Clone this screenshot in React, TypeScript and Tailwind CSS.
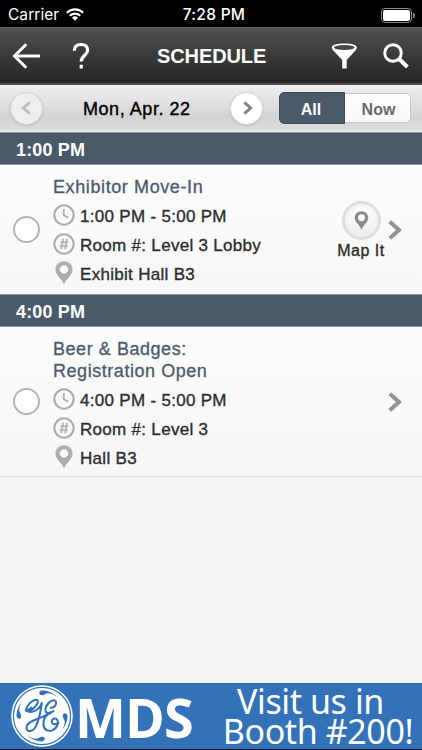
import React from "react";

const Pin = ({ className = "" }: { className?: string }) => (
  <svg viewBox="0 0 18 24" className={className} fill="currentColor">
    <path
      fillRule="evenodd"
      d="M9 .3C4.1.3.4 4 .4 8.6c0 5.400 6.400 9.300 8.600 15.100 2.200-5.800 8.600-9.700 8.600-15.100C17.600 4 13.900.3 9 .3Zm0 3.900a4.300 4.300 0 1 1 0 8.600 4.300 4.300 0 0 1 0-8.600Z"
    />
  </svg>
);

const Clock = () => (
  <svg viewBox="0 0 22 22" className="size-[22px]" fill="none" stroke="#adadad">
    <circle cx="11" cy="11" r="9.7" strokeWidth="2.1" />
    <path d="M10.800 5v6.200l4.400 2.600" strokeWidth="1.8" />
  </svg>
);

const Hash = () => (
  <svg viewBox="0 0 22 22" className="size-[22px]" fill="none" stroke="#adadad">
    <circle cx="11" cy="11" r="9.7" strokeWidth="2.1" />
    <path d="M10.300 5.700 8.200 16.300M14.100 5.700l-2.100 10.600M7.200 9.200h8.200M6.600 12.900h8.200" strokeWidth="1.500" />
  </svg>
);

const Chevron = () => (
  <svg viewBox="0 0 14 20" className="h-5 w-3.5 shrink-0" fill="none" stroke="#949494">
    <path d="M1.700 1.700 11 10l-9.300 8.300" strokeWidth="4" />
  </svg>
);

const Arrow = ({ flip, color }: { flip?: boolean; color: string }) => (
  <svg viewBox="0 0 10 14" className={flip ? "h-3.5 w-2.5 rotate-180" : "h-3.5 w-2.5"} fill="none" stroke={color}>
    <path d="M1.300 1.300 7.600 7l-6.300 5.700" strokeWidth="3" />
  </svg>
);

const TimeHeader = ({ children }: { children: React.ReactNode }) => (
  <div className="flex h-[33px] shrink-0 items-center border-y border-[#8c98a5] bg-[#4b5a6b] pl-4 text-[18px] font-bold text-white">
    <span className="mt-[3px] tracking-[0.15px]">{children}</span>
  </div>
);

const Detail = ({ icon, children }: { icon: React.ReactNode; children: React.ReactNode }) => (
  <div className="flex h-[29px] items-center gap-[5px] text-[17px] tracking-[0.3px] text-[#2d2d2d] [-webkit-text-stroke:0.35px_#2d2d2d]">
    <span className="flex w-[22px] justify-center">{icon}</span>
    <span className="mt-[3px] whitespace-nowrap">{children}</span>
  </div>
);

const Radio = () => (
  <span className="ml-[13px] size-[27px] shrink-0 rounded-full border-2 border-[#b4b4b4] bg-white" />
);

const swirl = "M46.500 12C40.500 7 35 5.300 31 5.600c-3.300.3-3.800 4.200-.6 4.600 2.800.3 4-1.900 6.300-2 3.200 0 6.200 1.500 9.800 3.800Z";

const GELogo = () => (
  <svg viewBox="0 0 62 62" className="size-[62px] shrink-0">
    <circle cx="31" cy="31" r="30.800" fill="#fff" />
    <circle cx="31" cy="31" r="28.600" fill="none" stroke="#3372b9" strokeWidth="1.200" />
    <g fill="#3372b9">
      <path d={swirl} />
      <path d={swirl} transform="rotate(90 31 31)" />
      <path d={swirl} transform="rotate(180 31 31)" />
      <path d={swirl} transform="rotate(270 31 31)" />
    </g>
    <g
      transform="translate(-3.500 -4) scale(.3333)"
      fill="none"
      stroke="#3372b9"
      strokeWidth="6"
      strokeLinecap="round"
      strokeLinejoin="round"
    >
      <path d="M72 80C60 88 52 94 56 84 60 72 72 58 84 56 96 55 92 68 82 78 72 89 64 91 60 90" />
      <path d="M60 91C80 98 98 82 103 66 99 95 95 115 86 134 78 152 58 156 57 141 57 126 75 120 94 112 108 107 120 104 130 94" />
      <path d="M130 80C143 82 152 62 141 58 128 55 112 76 114 89 116 99 130 98 138 90" />
      <path d="M128 95C114 98 107 117 108 131 109 148 122 152 134 148 150 142 156 122 147 114 138 109 130 118 134 126 138 132 146 130 153 125" />
    </g>
  </svg>
);

export default function App() {
  return (
    <div className="flex h-[750px] w-[422px] flex-col overflow-hidden bg-[#f5f5f5] font-['Liberation_Sans',Arial,sans-serif]">
      <div className="grid h-[27px] shrink-0 grid-cols-3 items-center bg-black px-2 pt-[3px] text-white">
        <div className="flex items-center gap-[7px] font-['Inter',sans-serif] text-[15.500px] tracking-[0.05px]">
          Carrier
          <svg viewBox="0 0 18 13" className="mb-0.5 h-[13px] w-[18px]" fill="none" stroke="#fff" strokeWidth="2.300">
            <path d="M.9 4.700a11.600 11.600 0 0 1 16.200 0M3.800 7.800a7.400 7.400 0 0 1 10.400 0" />
            <path d="M9 12.800 6 9.800a4.300 4.300 0 0 1 6 0Z" fill="#fff" stroke="none" />
          </svg>
        </div>
        <div className="whitespace-nowrap pl-1.5 text-center font-['Inter',sans-serif] text-[15.500px] font-medium tracking-[0.3px]">7:28 PM</div>
        <div className="-mr-px flex items-center justify-end gap-px">
          <span className="block h-[15px] w-[31px] rounded-[4px] border border-[#888] p-px">
            <span className="block size-full rounded-[2px] bg-white" />
          </span>
          <span className="h-[5px] w-[2px] rounded-r-full bg-[#888]" />
        </div>
      </div>

      <div className="flex h-[58px] shrink-0 items-center border-t border-b-[2px] border-t-[#626262] border-b-[#505050] bg-gradient-to-b from-[#515151] to-[#252525] text-white">
        <svg viewBox="0 0 28 26" className="ml-3 h-[26px] w-7 shrink-0" fill="none" stroke="#fff" strokeWidth="2.900">
          <path d="M14.300 1.200 2.500 13l11.800 11.800M2.500 13H28" />
        </svg>
        <svg viewBox="0 0 18 28" className="ml-8 h-7 w-[18px] shrink-0" fill="none" stroke="#fff" strokeWidth="3.200">
          <path d="M2.300 8.800C2.300 4.600 4.800 2.500 9 2.500s6.600 2.100 6.600 5.800c0 5-6.400 5.600-6.400 11.200M9.200 22.800v3.700" />
        </svg>
        <span className="ml-[67px] w-[110px] whitespace-nowrap text-[20px] font-bold tracking-[-0.100px]">SCHEDULE</span>
        <svg viewBox="0 0 27 26" className="ml-[64px] h-[26px] w-[27px] shrink-0">
          <path d="M.8 4.500C.8 1.700 6.200.5 13.300.5s12.500 1.200 12.500 4c0 1.500-1 2.600-2.300 4l-7.800 8.600v8.500h-4.500v-8.500L3.200 8.500C1.800 7 .8 6 .8 4.500Z" fill="#fff" />
          <ellipse cx="13.300" cy="4.600" rx="10.300" ry="2.500" fill="#464646" />
        </svg>
        <svg viewBox="0 0 26 26" className="ml-[25px] size-[26px] shrink-0" fill="none" stroke="#fff">
          <circle cx="10" cy="10" r="8.300" strokeWidth="2.900" />
          <path d="m15.800 15.800 8.600 8.200" strokeWidth="4" />
        </svg>
      </div>

      <div className="flex h-[47px] shrink-0 items-center border-b border-[#edf2f7] bg-gradient-to-b from-[#efeff1] via-[#d4d4d6] via-70% to-[#dedee0]">
        <span className="ml-2.5 flex size-[33px] shrink-0 items-center justify-center rounded-full border border-[#d5d5d5] bg-[#efeff0] pr-px shadow-sm">
          <Arrow flip color="#bdbdbd" />
        </span>
        <span className="ml-10 mt-0.5 w-[110px] whitespace-nowrap text-[18px] tracking-[0.550px] text-black [-webkit-text-stroke:0.4px_#000]">Mon, Apr. 22</span>
        <span className="ml-[37px] flex size-[33px] shrink-0 items-center justify-center rounded-full border border-[#dadada] bg-white pl-0.5 shadow">
          <Arrow color="#858585" />
        </span>
        <div className="ml-4 flex h-8 w-[132px] overflow-hidden rounded-[5px] text-[16px] font-bold">
          <span className="flex w-[66px] items-center justify-center rounded-l-[5px] border border-[#3c4b5c] bg-[#4b5a6b] pt-[3px] pr-0.5 text-white">All</span>
          <span className="my-px flex flex-1 items-center justify-center rounded-r-[5px] border border-l-0 border-[#c6c6c6] bg-gradient-to-b from-white to-[#f8f8f8] pt-[3px] pl-0.5 text-[#696969]">Now</span>
        </div>
      </div>

      <TimeHeader>1:00 PM</TimeHeader>
      <div className="flex h-[129px] shrink-0 items-center bg-gradient-to-b from-[#fcfcfc] to-[#f7f7f9]">
        <Radio />
        <div className="ml-[12px] w-[270px] pt-[4px] pl-px">
          <div className="h-[25px] text-[18px] leading-[22px] tracking-[0.600px] text-[#4b5a6b] [-webkit-text-stroke:0.3px_#4b5a6b]">Exhibitor Move-In</div>
          <Detail icon={<Clock />}>1:00 PM - 5:00 PM</Detail>
          <Detail icon={<Hash />}>Room #: Level 3 Lobby</Detail>
          <Detail icon={<Pin className="h-6 w-[18px] text-[#adadad]" />}>Exhibit Hall B3</Detail>
        </div>
        <div className="ml-[7px] flex w-[64px] shrink-0 flex-col items-center pt-0.5">
          <span className="flex size-[39px] items-center justify-center rounded-full border-[3px] border-[#dedede] bg-gradient-to-b from-white to-[#ededed] shadow-inner">
            <Pin className="h-[19px] w-[15px] shrink-0 text-[#8b8b8b]" />
          </span>
          <span className="mt-px whitespace-nowrap text-[16px] leading-5 tracking-[0.5px] text-[#2d2d2d] [-webkit-text-stroke:0.35px_#2d2d2d]">Map It</span>
        </div>
        <div className="-ml-[5px]"><Chevron /></div>
      </div>

      <TimeHeader>4:00 PM</TimeHeader>
      <div className="flex h-[150px] shrink-0 items-center border-b border-[#dcdcde] bg-gradient-to-b from-[#fcfcfc] to-[#f6f6f8]">
        <Radio />
        <div className="ml-[12px] w-[336px] pt-[6px] pl-px">
          <div className="h-[47px] text-[18px] leading-[22px] tracking-[0.550px] text-[#4b5a6b] [-webkit-text-stroke:0.3px_#4b5a6b]">
            Beer &amp; Badges:
            <br />
            Registration Open
          </div>
          <Detail icon={<Clock />}>4:00 PM - 5:00 PM</Detail>
          <Detail icon={<Hash />}>Room #: Level 3</Detail>
          <Detail icon={<Pin className="h-6 w-[18px] text-[#adadad]" />}>Hall B3</Detail>
        </div>
        <Chevron />
      </div>

      <div className="flex-1 bg-[#f5f5f5]" />

      <div className="flex h-[67px] shrink-0 items-center border-b border-[#06142a] bg-[#3372b9] font-['Open_Sans',sans-serif] text-white">
        <div className="ml-[11px] flex"><GELogo /></div>
        <span className="-mt-[3px] ml-[2px] w-[119px] whitespace-nowrap pt-1 text-[54px] leading-[60px] font-bold tracking-[-1px]">MDS</span>
        <div className="-mt-px ml-[24px] w-[200px] whitespace-nowrap text-center font-['Noto_Sans',sans-serif] text-[34px] leading-[30px] tracking-[-0.400px]">
          <div className="pr-[15px]">Visit us in</div>
          <div>Booth #200!</div>
        </div>
      </div>
    </div>
  );
}
